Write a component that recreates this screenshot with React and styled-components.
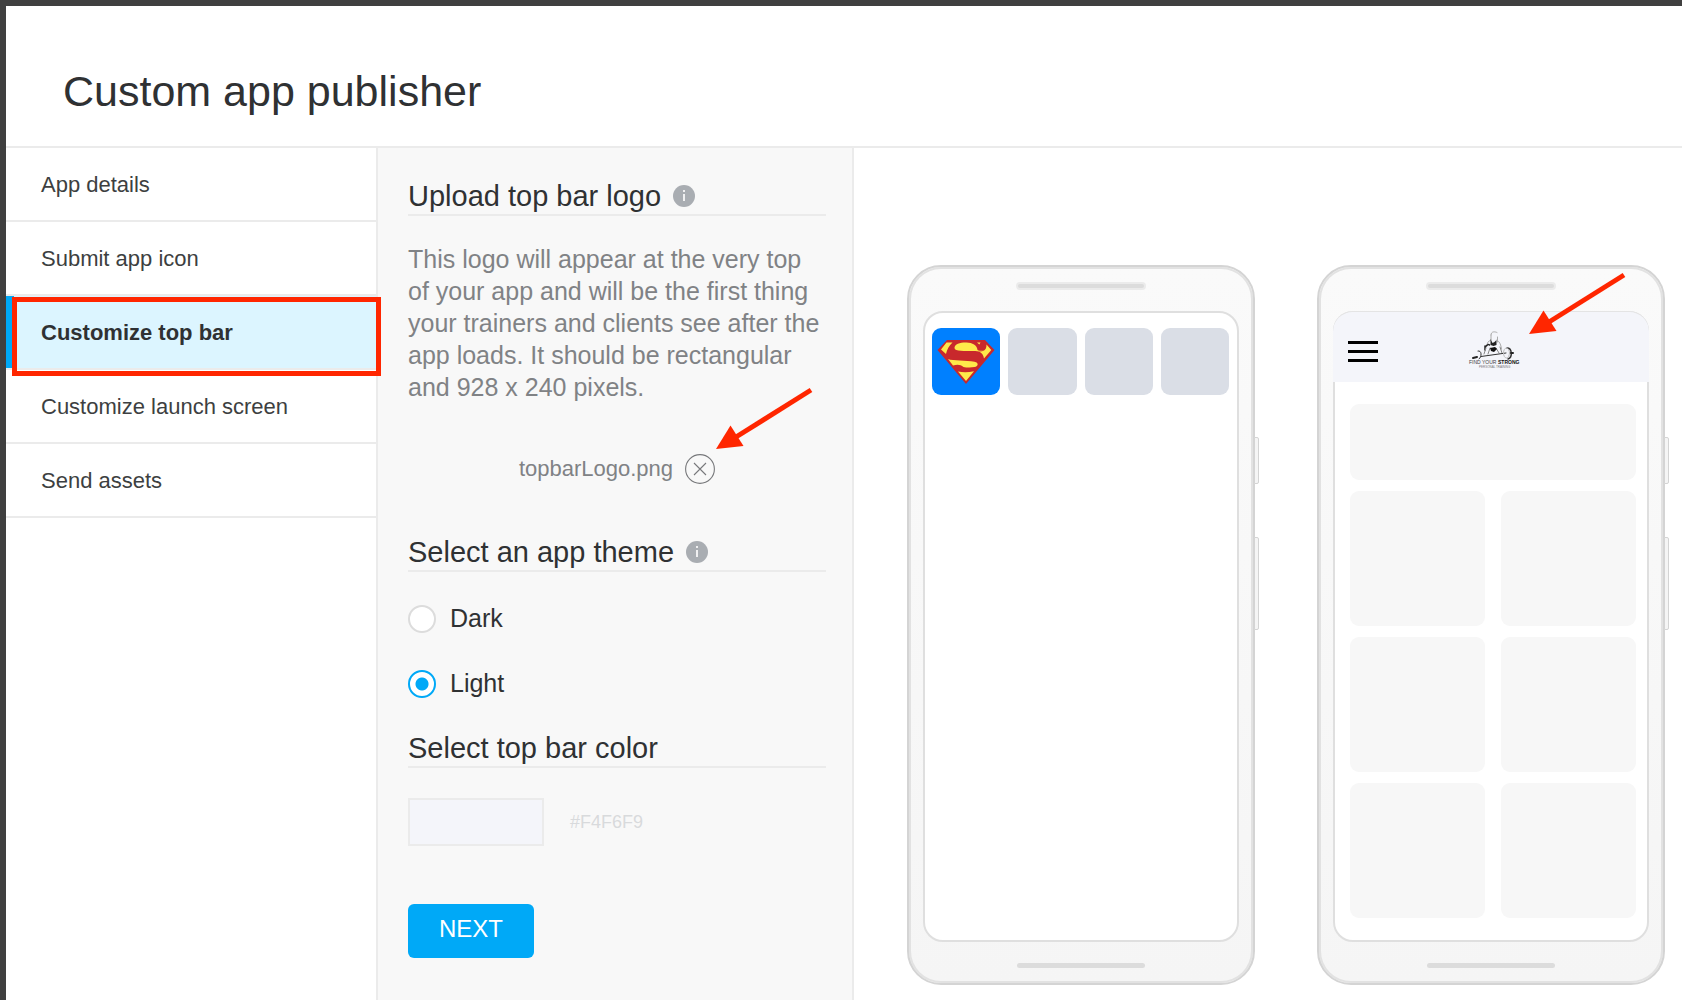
import React, { useState } from 'react'
import styled, { createGlobalStyle } from 'styled-components'

const steps = [
	'App details',
	'Submit app icon',
	'Customize top bar',
	'Customize launch screen',
	'Send assets',
]

const themes = ['Dark', 'Light']

const InfoIcon = () => (
	<svg width='22' height='22' viewBox='0 0 22 22' aria-hidden='true'>
		<circle cx='11' cy='11' r='11' fill='#a9adb2' />
		<rect x='10' y='5' width='2' height='2' fill='#f0f0f1' />
		<rect x='10' y='9' width='2' height='7' fill='#f0f0f1' />
	</svg>
)

const RemoveIcon = () => (
	<svg
		width='30'
		height='30'
		viewBox='0 0 30 30'
		fill='none'
		stroke='#77787b'
		aria-hidden='true'
	>
		<circle cx='15' cy='15' r='14.4' strokeWidth='1.1' />
		<path d='M9 9l12 12M21 9L9 21' strokeWidth='1.1' />
	</svg>
)

const MenuIcon = () => (
	<svg width='30' height='21' viewBox='0 0 30 21' aria-hidden='true'>
		<path d='M0 0h30v3H0zM0 9h30v3H0zM0 18h30v3H0z' fill='#000' />
	</svg>
)

const HeroLogo = () => (
	<svg width='58' height='44' viewBox='0 0 58 44' aria-hidden='true'>
		<path d='M10 0h38L57.500 10 29 44 .5 10z' fill='#c8282c' />
		<path d='M9.500 2.500h6c-3.500 3-5.500 7-6.500 11.500L4 9.500z' fill='#ffe94a' />
		<path
			d='M17.500 8c0-4 6-5.700 12-5.500 6 .2 10.500 2.500 11 7.500 1.500 1 4.500.8 6 .8-4 1.200-7 .4-12 .3-6-.1-17 .4-17-3.100z'
			fill='#ffe94a'
		/>
		<path d='M40 2.500h3.500l-1.200 2z' fill='#ffe94a' />
		<path
			d='M49.500 4.500l4.800 5.500-7.300 8.500c-.5-3.500-2-5.500-5-7 4.500 0 7.500-1 7.500-7z'
			fill='#ffe94a'
		/>
		<path
			d='M11 19c5 2 18 1.300 26.500 2.800 4.500.9 4 4.700 0 5.300-4 .8-8.500.4-11-.1-3-2.500-6-2.700-10.500-1.500z'
			fill='#ffe94a'
		/>
		<path d='M21 31.500c5 1.200 10.500 1 16-.2L29 41z' fill='#ffe94a' />
	</svg>
)

const TrainerLogo = () => (
	<svg
		width='52'
		height='42'
		viewBox='0 0 52 42'
		role='img'
		aria-label='Find your strong'
	>
		<g fill='none' stroke='#888' strokeLinecap='round'>
			<path d='M23 5c0-4 4-3.500 6-2.500M23 5v5M29.500 7v5' stroke='#aaa' />
			<path d='M23 10c-3 1-4 3-4 6M29 10c3 2 4 5 4.500 9' stroke='#aaa' />
			<path d='M17.500 17c1-2 3-3 4-2M17 16v4' stroke='#222' strokeWidth='1.500' />
			<path d='M18 18l-2 6M22 18l-2 6M28 18l3 5M32 17l2 6' />
			<path d='M13 26.500L38 23' stroke='#333' />
			<path d='M10 21c4-1 4 6 1 8' stroke='#333' />
			<path d='M39 18c5 0 6 9 1 11' stroke='#333' strokeWidth='1.500' />
			<ellipse cx='38.500' cy='23' rx='3' ry='5' stroke='#bbb' />
			<path d='M5 28l4-1M43 23l2 0' stroke='#222' strokeWidth='2' />
		</g>
		<path d='M22.500 9l2 4 2-1 2-2v5l-3 1-3-1z' fill='#222' />
		<path d='M22 18l5-1 2 2-3 3-3-1z' fill='#111' />
		<text x='1' y='34' fontSize='5' fill='#444'>
			FIND YOUR
		</text>
		<text x='30' y='34' fontSize='5' fontWeight='700' fill='#111'>
			STRONG
		</text>
		<text x='11' y='38' fontSize='3' fill='#777'>
			PERSONAL TRAINING
		</text>
	</svg>
)

const Arrow = () => (
	<svg width='98' height='64' viewBox='0 0 98 64' aria-hidden='true'>
		<path d='M95 3L20 50' stroke='#ff2600' strokeWidth='5' />
		<path d='M0 62L14.500 38.500 27.500 59z' fill='#ff2600' />
	</svg>
)

const Phone = ({ children }) => (
	<PhoneBody>
		<Speaker />
		<Screen>{children}</Screen>
		<HomeBar />
		<SideKey $top={170} $length={47} />
		<SideKey $top={270} $length={93} />
	</PhoneBody>
)

const App = () => {
	const [active, setActive] = useState('Customize top bar')
	const [theme, setTheme] = useState('Light')

	return (
		<>
			<GlobalStyle />
			<Page>
				<Header>
					<h1>Custom app publisher</h1>
				</Header>
				<Content>
					<Sidebar>
						{steps.map((step) => (
							<Step key={step}>
								<StepButton
									type='button'
									$active={step === active}
									onClick={() => setActive(step)}
								>
									{step}
								</StepButton>
								{step === active && <Highlight />}
							</Step>
						))}
					</Sidebar>

					<Settings>
						<SectionTitle>
							Upload top bar logo <InfoIcon />
						</SectionTitle>
						<Description>
							This logo will appear at the very top of your app and will be the
							first thing your trainers and clients see after the app loads. It
							should be rectangular and 928 x 240 pixels.
						</Description>
						<FileRow>
							<span>topbarLogo.png</span>
							<RemoveButton type='button' aria-label='Remove topbarLogo.png'>
								<RemoveIcon />
								<FileArrow>
									<Arrow />
								</FileArrow>
							</RemoveButton>
						</FileRow>

						<SectionTitle>
							Select an app theme <InfoIcon />
						</SectionTitle>
						<ThemeList>
							{themes.map((name) => (
								<ThemeOption key={name}>
									<Radio
										type='radio'
										name='theme'
										value={name}
										checked={theme === name}
										onChange={() => setTheme(name)}
									/>
									{name}
								</ThemeOption>
							))}
						</ThemeList>

						<SectionTitle>Select top bar color</SectionTitle>
						<ColorRow>
							<Swatch type='button' aria-label='Top bar color' />
							<span>#F4F6F9</span>
						</ColorRow>
						<NextButton type='button'>NEXT</NextButton>
					</Settings>

					<Preview>
						<Phone>
							<AppIcons>
								<AppIcon $primary>
									<HeroLogo />
								</AppIcon>
								<AppIcon />
								<AppIcon />
								<AppIcon />
							</AppIcons>
						</Phone>
						<Phone>
							<TopBar>
								<MenuIcon />
								<TrainerLogo />
							</TopBar>
							<Cards>
								<Card $wide />
								<Card />
								<Card />
								<Card />
								<Card />
								<Card />
								<Card />
							</Cards>
							<LogoArrow>
								<Arrow />
							</LogoArrow>
						</Phone>
					</Preview>
				</Content>
			</Page>
		</>
	)
}

const GlobalStyle = createGlobalStyle`
	* {
		box-sizing: border-box;
	}
	body {
		margin: 0;
		background: #404040;
		color: #2f3133;
		font-family: 'Liberation Sans', Arial, Helvetica, sans-serif;
		overflow-x: hidden;
	}
	h1, h2, p, ul {
		margin: 0;
		padding: 0;
		font-weight: 400;
	}
	button {
		font-family: inherit;
		cursor: pointer;
	}
	svg {
		display: block;
		flex-shrink: 0;
	}
`

const Page = styled.div`
	display: flex;
	flex-direction: column;
	min-height: 100vh;
	border-top: 6px solid #404040;
	border-left: 6px solid #404040;
	background: #fff;
`

const Header = styled.header`
	padding: 61px 57px 31px;
	border-bottom: 2px solid #ebebeb;
	h1 {
		font-size: 43px;
		line-height: 48px;
	}
`

const Content = styled.main`
	display: flex;
	flex: 1;
`

const Sidebar = styled.ul`
	flex: 0 0 372px;
	border-right: 2px solid #ebebeb;
	list-style: none;
`

const Step = styled.li`
	position: relative;
	border-bottom: 2px solid #ebebeb;
`

const StepButton = styled.button`
	display: block;
	width: 100%;
	height: 72px;
	padding: 2px 27px 0;
	border: 0;
	border-left: 8px solid ${({ $active }) => ($active ? '#00a9f7' : '#fff')};
	background: ${({ $active }) => ($active ? '#dcf5ff' : '#fff')};
	color: ${({ $active }) => ($active ? '#2f3133' : '#3d3f41')};
	font-size: 22px;
	font-weight: ${({ $active }) => ($active ? 700 : 400)};
	text-align: left;
`

const Highlight = styled.div`
	position: absolute;
	z-index: 1;
	inset: 1px -5px -8px 6px;
	border: 5px solid #ff2600;
	pointer-events: none;
`

const Settings = styled.section`
	flex: 0 0 476px;
	padding: 32px 26px 32px 30px;
	border-right: 2px solid #ebebeb;
	background: #f8f8f8;
`

const SectionTitle = styled.h2`
	display: flex;
	align-items: center;
	gap: 12px;
	padding-bottom: 2px;
	border-bottom: 2px solid #ebebeb;
	font-size: 29px;
	line-height: 32px;
`

const Description = styled.p`
	margin-top: 27px;
	color: #808285;
	font-size: 25px;
	line-height: 32px;
`

const FileRow = styled.div`
	display: flex;
	align-items: center;
	justify-content: center;
	gap: 12px;
	margin: 51px 0 52px;
	color: #808285;
	font-size: 22px;
`

const RemoveButton = styled.button`
	position: relative;
	padding: 0;
	border: 0;
	background: none;
`

const FileArrow = styled.span`
	position: absolute;
	bottom: 33px;
	left: 31px;
`

const ThemeList = styled.div`
	display: grid;
	gap: 36px;
	margin: 32px 0 34px;
`

const ThemeOption = styled.label`
	display: flex;
	align-items: center;
	gap: 14px;
	font-size: 25px;
	line-height: 29px;
`

const Radio = styled.input`
	appearance: none;
	width: 28px;
	height: 28px;
	margin: 0;
	border: 2px solid #dcdcdc;
	border-radius: 50%;
	background: #fff;
	&:checked {
		border-color: #00a9f7;
		background: radial-gradient(circle, #00a9f7 6px, #fff 7px);
	}
`

const ColorRow = styled.div`
	display: flex;
	align-items: center;
	gap: 26px;
	margin: 30px 0 58px;
	color: #d8dadc;
	font-size: 18px;
`

const Swatch = styled.button`
	width: 136px;
	height: 48px;
	border: 2px solid #ebebeb;
	background: #f4f5fa;
`

const NextButton = styled.button`
	width: 126px;
	height: 54px;
	padding: 0 0 4px;
	border: 0;
	border-radius: 6px;
	background: #00a9f7;
	color: #fff;
	font-size: 24px;
`

const Preview = styled.section`
	display: flex;
	flex: 1;
	align-items: flex-start;
	gap: 62px;
	padding: 117px 16px 15px 53px;
`

const PhoneBody = styled.div`
	position: relative;
	display: flex;
	flex: 0 0 348px;
	flex-direction: column;
	align-items: center;
	height: 720px;
	padding: 15px 14px;
	border: 2px solid #d4d4d4;
	border-radius: 34px;
	background: linear-gradient(#fafafa, #f5f5f5);
	box-shadow: inset 0 0 0 2px #e2e2e2;
`

const Speaker = styled.div`
	width: 130px;
	height: 8px;
	margin-bottom: 21px;
	border: 2px solid #ebebeb;
	border-radius: 4px;
	background: #dcdcdc;
`

const Screen = styled.div`
	position: relative;
	flex: 1;
	align-self: stretch;
	border: 2px solid #dfdfdf;
	border-radius: 20px;
	background: #fff;
`

const HomeBar = styled.div`
	width: 128px;
	height: 5px;
	margin-top: 21px;
	border-radius: 3px;
	background: #dcdcdc;
`

const SideKey = styled.div`
	position: absolute;
	top: ${({ $top }) => $top}px;
	right: -6px;
	width: 5px;
	height: ${({ $length }) => $length}px;
	border: 1px solid #d4d4d4;
	border-radius: 0 2px 2px 0;
	background: #f5f5f5;
`

const AppIcons = styled.div`
	display: grid;
	grid-template-columns: repeat(4, 1fr);
	gap: 8px;
	padding: 15px 8px 15px 7px;
`

const AppIcon = styled.div`
	display: flex;
	align-items: center;
	justify-content: center;
	height: 67px;
	border-radius: 9px;
	background: ${({ $primary }) => ($primary ? '#0080ff' : '#dadee6')};
`

const TopBar = styled.div`
	display: grid;
	grid-template-columns: 1fr auto 1fr;
	align-items: center;
	height: 71px;
	margin: -2px -2px 0;
	padding: 8px 9px 0 15px;
	border-top: 1px solid #e4e4e4;
	border-radius: 20px 20px 0 0;
	background: #f4f5fa;
`

const Cards = styled.div`
	display: grid;
	grid-template-columns: 1fr 1fr;
	gap: 11px 16px;
	padding: 22px 11px 0 15px;
`

const Card = styled.div`
	grid-column: ${({ $wide }) => ($wide ? 'span 2' : 'auto')};
	height: ${({ $wide }) => ($wide ? 76 : 135)}px;
	border-radius: 9px;
	background: #f7f7f7;
`

const LogoArrow = styled.div`
	position: absolute;
	top: -41px;
	left: 194px;
`

export default App
